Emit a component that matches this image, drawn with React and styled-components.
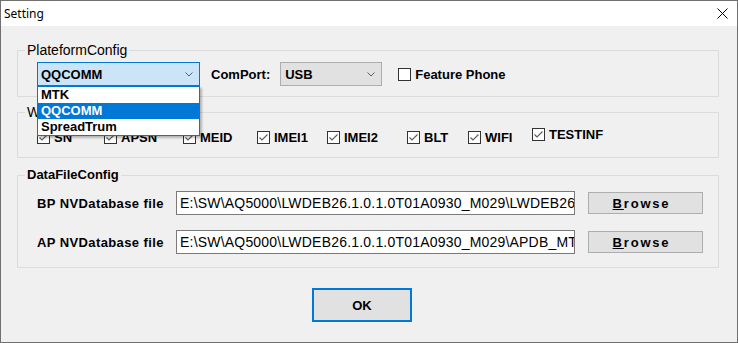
import React from "react";
import styled, { createGlobalStyle } from "styled-components";

const GlobalStyle = createGlobalStyle`
  body {
    margin: 0;
    background: #ffffff;
  }
`;

const Window = styled.div`
  width: 738px;
  height: 343px;
  box-sizing: border-box;
  border: 1px solid #707070;
  background: #f0f0f0;
  display: flex;
  flex-direction: column;
  font-family: "Liberation Sans", Arial, sans-serif;
  color: #000;
`;

const TitleBar = styled.div`
  height: 25px;
  flex: none;
  background: #fff;
  display: flex;
  align-items: center;
  justify-content: space-between;
  padding: 0 9px 0 3px;
  font-family: "Noto Sans", "Liberation Sans", sans-serif;
  font-size: 12px;
`;

const Body = styled.div`
  display: flex;
  flex-direction: column;
  padding: 16px 18px 0 16px;
`;

const Group = styled.fieldset`
  margin: ${(p) => p.$top || 0}px 0 0 0;
  padding: 0;
  min-width: 0;
  border: 1px solid #dcdcdc;
`;

const Legend = styled.legend`
  margin-left: 7px;
  padding: 0 2px;
  font-size: ${(p) => (p.$bold ? 13 : 14)}px;
  font-weight: ${(p) => (p.$bold ? 700 : 400)};
  line-height: 16px;
`;

const Row = styled.div`
  display: flex;
  align-items: center;
  padding: ${(p) => p.$pad};
`;

const Stack = styled.div`
  display: flex;
  flex-direction: column;
  gap: 15px;
  padding: 8px 0 13px 19px;
`;

const Bold = styled.span`
  font-size: 13px;
  font-weight: 700;
  margin-left: ${(p) => p.$ml || 0}px;
  white-space: nowrap;
`;

const ComboWrap = styled.div`
  position: relative;
  margin-left: ${(p) => p.$ml || 0}px;
`;

const Combo = styled.div`
  width: ${(p) => p.$w}px;
  height: 24px;
  box-sizing: border-box;
  border: 1px solid ${(p) => (p.$focus ? "#0078d7" : "#adadad")};
  background: ${(p) => (p.$focus ? "#cce4f7" : "#e1e1e1")};
  display: flex;
  align-items: center;
  justify-content: space-between;
  padding: 0 6px 0 ${(p) => (p.$focus ? 3 : 4)}px;
  font-size: 13px;
  font-weight: 700;
`;

const DropList = styled.ul`
  position: absolute;
  top: 24px;
  left: 0;
  z-index: 5;
  width: 163px;
  box-sizing: border-box;
  margin: 0;
  padding: 0;
  list-style: none;
  background: #fff;
  border: 1px solid #0078d7;
  box-shadow: 2px 2px 2px rgba(0, 0, 0, 0.25);
`;

const DropItem = styled.li`
  height: 16px;
  line-height: 16px;
  padding-left: 3px;
  font-size: 13px;
  font-weight: 700;
  background: ${(p) => (p.$sel ? "#0078d7" : "transparent")};
  color: ${(p) => (p.$sel ? "#fff" : "#000")};
`;

const CheckItem = styled.div`
  width: ${(p) => p.$w}px;
  flex: none;
  display: flex;
  align-items: center;
  gap: 4px;
  margin-left: ${(p) => p.$ml || 0}px;
  transform: translateY(${(p) => (p.$raised ? -3 : 0)}px);
`;

const FieldLabel = styled.div`
  width: 139px;
  flex: none;
  font-size: 13px;
  font-weight: 700;
  letter-spacing: 0.4px;
`;

const Field = styled.div`
  width: 399px;
  height: 24px;
  box-sizing: border-box;
  border: 1px solid #7a7a7a;
  background: #fff;
  padding-left: 3px;
  font-size: 14px;
  letter-spacing: 0.2px;
  line-height: 22px;
  white-space: nowrap;
  overflow: hidden;
`;

const Button = styled.button`
  width: ${(p) => p.$w}px;
  height: ${(p) => p.$h}px;
  margin-left: ${(p) => p.$ml || 0}px;
  box-sizing: border-box;
  border: ${(p) => (p.$default ? "2px solid #0078d7" : "1px solid #adadad")};
  background: #e1e1e1;
  font-family: "Liberation Sans", Arial, sans-serif;
  font-size: 13px;
  font-weight: 700;
  letter-spacing: ${(p) => p.$ls || 0}px;
  color: #000;
  padding: 0;
`;

const Mnemonic = styled.span`
  display: inline-block;
  margin-right: 8px;

  &::first-letter {
    text-decoration: underline;
  }
`;

const Footer = styled.div`
  display: flex;
  padding: 20px 0 0 295px;
`;

const Chevron = () => (
  <svg width="8" height="5" viewBox="0 0 8 5">
    <path d="M0.5 0.5 L4 4 L7.5 0.5" fill="none" stroke="#606060" strokeWidth="1" />
  </svg>
);

const CloseIcon = () => (
  <svg width="11" height="11" viewBox="0 0 11 11">
    <path d="M0.5 0.5 L10.5 10.5 M10.5 0.5 L0.5 10.5" stroke="#000" strokeWidth="1" />
  </svg>
);

const CheckBox = ({ checked }) => (
  <svg width="13" height="13" viewBox="0 0 13 13">
    <rect x="0.5" y="0.5" width="12" height="12" fill="#fff" stroke="#333" />
    {checked && (
      <path d="M2.5 6.5 L5 9 L10.5 3.5" fill="none" stroke="#606060" strokeWidth="1.2" />
    )}
  </svg>
);

const items = [
  { name: "SN", w: 67 },
  { name: "APSN", w: 79 },
  { name: "MEID", w: 74 },
  { name: "IMEI1", w: 70 },
  { name: "IMEI2", w: 80 },
  { name: "BLT", w: 61 },
  { name: "WIFI", w: 64 },
  { name: "TESTINF", w: 80, raised: true },
];

const files = [
  { label: "BP NVDatabase file", path: "E:\\SW\\AQ5000\\LWDEB26.1.0.1.0T01A0930_M029\\LWDEB26.1.0.1.0T01A0930_M029.db" },
  { label: "AP NVDatabase file", path: "E:\\SW\\AQ5000\\LWDEB26.1.0.1.0T01A0930_M029\\APDB_MT6739_S01_MOLY.db" },
];

export default function App() {
  return (
    <>
      <GlobalStyle />
      <Window>
        <TitleBar>
          <span>Setting</span>
          <CloseIcon />
        </TitleBar>
        <Body>
          <Group>
            <Legend>PlateformConfig</Legend>
            <Row $pad="4px 0 10px 19px">
              <ComboWrap>
                <Combo $w={163} $focus>
                  <span>QQCOMM</span>
                  <Chevron />
                </Combo>
                <DropList>
                  <DropItem>MTK</DropItem>
                  <DropItem $sel>QQCOMM</DropItem>
                  <DropItem>SpreadTrum</DropItem>
                </DropList>
              </ComboWrap>
              <Bold $ml={11}>ComPort:</Bold>
              <ComboWrap $ml={10}>
                <Combo $w={102}>
                  <span>USB</span>
                  <Chevron />
                </Combo>
              </ComboWrap>
              <CheckItem $w={120} $ml={16}>
                <CheckBox />
                <Bold>Feature Phone</Bold>
              </CheckItem>
            </Row>
          </Group>

          <Group $top={7}>
            <Legend>WriteConfig</Legend>
            <Row $pad="10px 0 12px 19px">
              {items.map((it) => (
                <CheckItem key={it.name} $w={it.w} $raised={it.raised}>
                  <CheckBox checked />
                  <Bold>{it.name}</Bold>
                </CheckItem>
              ))}
            </Row>
          </Group>

          <Group $top={9}>
            <Legend $bold>DataFileConfig</Legend>
            <Stack>
              {files.map((f) => (
                <Row key={f.label}>
                  <FieldLabel>{f.label}</FieldLabel>
                  <Field>{f.path}</Field>
                  <Button $w={115} $h={22} $ml={13} $ls={1.8}>
                    <Mnemonic>Browse</Mnemonic>
                  </Button>
                </Row>
              ))}
            </Stack>
          </Group>

          <Footer>
            <Button $w={100} $h={34} $default>
              OK
            </Button>
          </Footer>
        </Body>
      </Window>
    </>
  );
}
